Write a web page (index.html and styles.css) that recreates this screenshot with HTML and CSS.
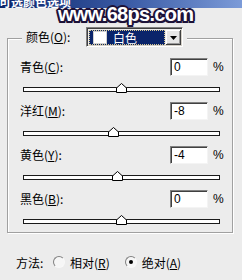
FILE: index.html
```html
<!DOCTYPE html>
<html>
<head>
<meta charset="utf-8">
<link rel="stylesheet" href="styles.css">
</head>
<body>
<div class="titlebar"><span class="title">可选颜色选项</span></div>
<div class="watermark">www.68ps.com</div>
<div class="dialog">
  <div class="group">
    <div class="legend">
      <span class="legend-label">颜色(<u>O</u>):</span>
      <div class="select">
        <div class="select-field"><span class="swatch"></span><span class="select-text">白色</span></div>
        <div class="select-btn"><svg width="7" height="4" viewBox="0 0 7 4"><polygon points="0,0 7,0 3.5,4" fill="#000"/></svg></div>
      </div>
    </div>
    <div class="channel">
      <div class="row"><span class="label">青色(<u>C</u>):</span><span class="input">0</span><span class="pct">%</span></div>
      <div class="slider"><span class="thumb" style="left:91.5px"><svg width="11" height="10" viewBox="0 0 11 10"><polygon points="5.5,0.5 10.5,5 10.5,9.5 0.5,9.5 0.5,5" fill="#fff" stroke="#000"/></svg></span></div>
    </div>
    <div class="channel">
      <div class="row"><span class="label">洋红(<u>M</u>):</span><span class="input">-8</span><span class="pct">%</span></div>
      <div class="slider"><span class="thumb" style="left:83.7px"><svg width="11" height="10" viewBox="0 0 11 10"><polygon points="5.5,0.5 10.5,5 10.5,9.5 0.5,9.5 0.5,5" fill="#fff" stroke="#000"/></svg></span></div>
    </div>
    <div class="channel">
      <div class="row"><span class="label">黄色(<u>Y</u>):</span><span class="input">-4</span><span class="pct">%</span></div>
      <div class="slider"><span class="thumb" style="left:87.6px"><svg width="11" height="10" viewBox="0 0 11 10"><polygon points="5.5,0.5 10.5,5 10.5,9.5 0.5,9.5 0.5,5" fill="#fff" stroke="#000"/></svg></span></div>
    </div>
    <div class="channel">
      <div class="row"><span class="label">黑色(<u>B</u>):</span><span class="input">0</span><span class="pct">%</span></div>
      <div class="slider"><span class="thumb" style="left:91.5px"><svg width="11" height="10" viewBox="0 0 11 10"><polygon points="5.5,0.5 10.5,5 10.5,9.5 0.5,9.5 0.5,5" fill="#fff" stroke="#000"/></svg></span></div>
    </div>
  </div>
  <div class="method">
    <span class="method-label">方法:</span>
    <span class="radio"></span><span class="radio-text">相对(<u>R</u>)</span>
    <span class="radio radio-checked"></span><span class="radio-text">绝对(<u>A</u>)</span>
  </div>
</div>
</body>
</html>
```

FILE: styles.css
```css
html, body {
  margin: 0;
  padding: 0;
}
body {
  width: 242px;
  height: 280px;
  overflow: hidden;
  position: relative;
  background: #ececec;
  font-family: "Noto Sans CJK SC", "Liberation Sans", sans-serif;
  font-size: 12px;
  color: #000;
}
u {
  text-decoration: underline;
  text-underline-offset: 1px;
}
.titlebar {
  height: 8px;
  overflow: hidden;
  display: flex;
  align-items: flex-end;
  background: linear-gradient(90deg, #0a246a 0%, #3d5ea8 55%, #7c9bd8 100%);
}
.title {
  color: #fff;
  font-weight: bold;
  font-size: 12px;
  line-height: 13px;
  white-space: nowrap;
  margin-left: -1px;
}
.watermark {
  position: absolute;
  left: 58px;
  top: 3px;
  font-family: "Liberation Sans", sans-serif;
  font-weight: bold;
  font-size: 20px;
  line-height: 22px;
  letter-spacing: -0.7px;
  color: #fff;
  text-shadow:
    -2px 0 0 #1c1238, 2px 0 0 #1c1238, 0 -2px 0 #1c1238, 0 2px 0 #1c1238,
    -1.5px -1.5px 0 #1c1238, 1.5px -1.5px 0 #1c1238, 1.5px 1.5px 0 #1c1238, -1.5px 1.5px 0 #1c1238,
    0 0 3px #3a2a60;
}
.dialog {
  padding: 30px 0 0 7px;
}
.group {
  width: 226px;
  box-sizing: border-box;
  border: 1px solid #a0a0a0;
  box-shadow: 1px 1px 0 #fff, inset 1px 1px 0 #fff;
  padding: 0 0 8px 0;
}
.legend {
  display: flex;
  align-items: center;
  width: max-content;
  height: 20px;
  margin: -12px 0 0 14px;
  padding: 0 4px;
  background: #ececec;
}
.legend-label {
  width: 60px;
  line-height: 16px;
}
.select {
  width: 97px;
  height: 20px;
  box-sizing: border-box;
  display: flex;
  border: 1px solid;
  border-color: #808080 #fff #fff #808080;
  box-shadow: inset 1px 1px 0 #404040, inset -1px -1px 0 #d4d0c8;
  padding: 2px 1px 1px 2px;
  gap: 1px;
}
.select-field {
  flex: 1;
  display: flex;
  align-items: center;
  background: #0a246a;
  border: 1px dotted #d8c890;
}
.swatch {
  width: 14px;
  height: 13px;
  margin-left: 3px;
  background: #fff;
  box-sizing: border-box;
  border: 1px solid #d0d0d0;
}
.select-text {
  color: #fff;
  margin-left: 6px;
  line-height: 14px;
}
.select-btn {
  width: 15px;
  display: flex;
  align-items: center;
  justify-content: center;
  background: #e6e6e6;
  box-shadow: inset -1px -1px 0 #404040, inset 1px 1px 0 #fff, inset -2px -2px 0 #9a9a9a;
}
.channel {
  margin-top: 10px;
}
.legend + .channel {
  margin-top: 11px;
}
.row {
  display: flex;
  align-items: center;
  height: 18px;
  padding-left: 12px;
}
.label {
  flex: 1;
  line-height: 16px;
}
.input {
  width: 38px;
  height: 18px;
  box-sizing: border-box;
  background: #fff;
  border: 1px solid;
  border-color: #808080 #f4f4f4 #f4f4f4 #808080;
  box-shadow: inset 1px 1px 0 #404040;
  padding-left: 3px;
  font-family: "Liberation Sans", sans-serif;
  font-size: 12px;
  line-height: 16px;
}
.pct {
  width: 19px;
  margin-left: 5px;
  font-family: "Liberation Sans", sans-serif;
  font-size: 12px;
}
.slider {
  position: relative;
  margin: 11px 0 0 15px;
  width: 197px;
  height: 5px;
  box-sizing: border-box;
  border: 1px solid #1a1a1a;
  background: #fff;
}
.thumb {
  position: absolute;
  top: -5px;
  width: 11px;
  height: 10px;
  display: block;
}
.thumb svg {
  display: block;
}
.method {
  display: flex;
  align-items: center;
  height: 16px;
  margin-top: 21px;
  padding-left: 9px;
}
.method-label {
  width: 37px;
}
.radio {
  width: 12px;
  height: 12px;
  box-sizing: border-box;
  border-radius: 50%;
  border: 1px solid;
  border-color: #808080 #f8f8f8 #f8f8f8 #808080;
  background: #f6f6f6;
  display: flex;
  align-items: center;
  justify-content: center;
}
.radio-checked::after {
  content: "";
  width: 4px;
  height: 4px;
  border-radius: 50%;
  background: #000;
}
.radio-text {
  margin-left: 5px;
  margin-right: 15px;
}
```
